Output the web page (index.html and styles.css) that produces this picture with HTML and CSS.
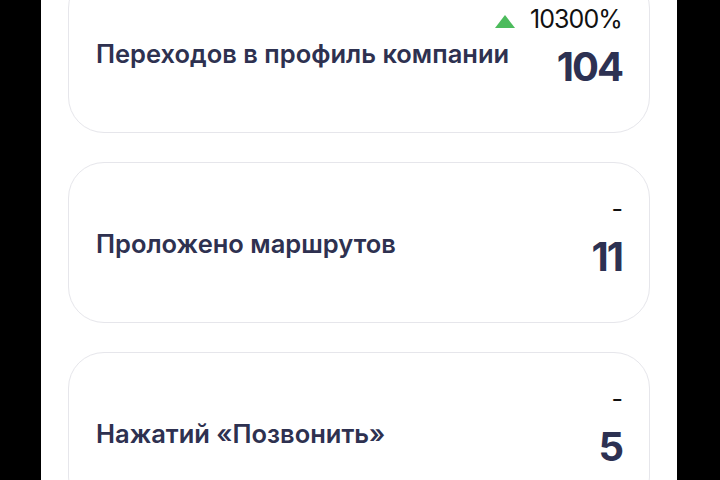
FILE: index.html
```html
<!DOCTYPE html>
<html lang="ru">
<head>
<meta charset="utf-8">
<link rel="stylesheet" href="styles.css">
</head>
<body>
<div class="screen">
  <div class="list">
    <div class="card">
      <div class="title">Переходов в профиль компании</div>
      <div class="stat">
        <div class="delta"><svg class="up" width="20" height="13" viewBox="0 0 20 13"><polygon points="10,0 20,13 0,13" fill="#4cbb5c"/></svg><span>10300%</span></div>
        <div class="value">104</div>
      </div>
    </div>
    <div class="card">
      <div class="title">Проложено маршрутов</div>
      <div class="stat">
        <div class="delta"><span>-</span></div>
        <div class="value">11</div>
      </div>
    </div>
    <div class="card">
      <div class="title">Нажатий «Позвонить»</div>
      <div class="stat">
        <div class="delta"><span>-</span></div>
        <div class="value">5</div>
      </div>
    </div>
  </div>
</div>
</body>
</html>
```

FILE: styles.css
```css
html, body {
  margin: 0;
  padding: 0;
  background: #000;
  height: 100%;
  overflow: hidden;
}
.screen {
  width: 636px;
  margin-left: 41px;
  height: 480px;
  background: #fff;
  overflow: hidden;
  font-family: Inter, "Noto Sans", sans-serif;
}
.list {
  display: flex;
  flex-direction: column;
  gap: 29px;
  padding: 0 27px;
  margin-top: -28px;
}
.card {
  height: 161px;
  box-sizing: border-box;
  border: 1.5px solid #e6e6eb;
  border-radius: 36px;
  background: #fff;
  display: flex;
  align-items: center;
  justify-content: space-between;
  padding: 0 27px 0 27px;
}
.title {
  flex: 1 1 auto;
  min-width: 0;
  white-space: nowrap;
  font-size: 25.5px;
  font-weight: 600;
  color: #2e3150;
  margin-top: 2px;
}
.stat {
  flex: 0 0 auto;
  align-self: flex-start;
  margin-top: 32px;
  display: flex;
  flex-direction: column;
  align-items: flex-end;
}
.delta {
  display: flex;
  align-items: center;
  gap: 15px;
  font-size: 25px;
  line-height: 28px;
  letter-spacing: -0.9px;
  color: #111;
}
.up {
  display: block;
  margin-top: 4px;
}
.value {
  margin-top: 12px;
  font-size: 40px;
  line-height: 44px;
  font-weight: 700;
  letter-spacing: -2px;
  color: #2d3152;
}
```
